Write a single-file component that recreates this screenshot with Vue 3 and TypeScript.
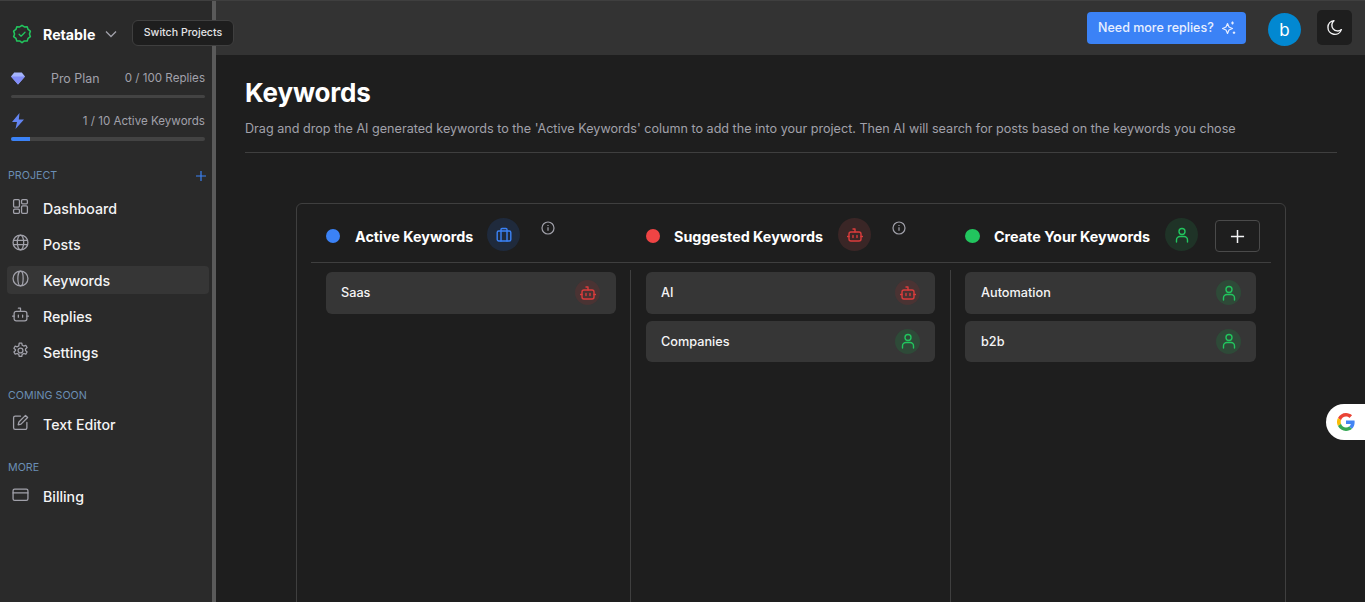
<template>
  <div class="page">
    <aside class="sidebar">
      <div class="brand">
        <svg class="brand-logo" viewBox="0 0 22 22" fill="none" stroke="#22c55e" stroke-width="1.7" stroke-linejoin="round" stroke-linecap="round">
          <path d="M11 1.500l2.600 1.700 3.100-.1 1 2.900 2.500 1.900-1 3 1 3-2.500 1.900-1 2.900-3.100-.1L11 20.500l-2.600-1.900-3.100.1-1-2.900-2.500-1.900 1-3-1-3 2.500-1.900 1-2.900 3.100.1z" />
          <path d="M7.800 11.200l2.200 2.200 4.300-4.300" stroke-width="1.400" />
        </svg>
        <span class="brand-name">Retable</span>
        <svg class="chevron" viewBox="0 0 12 8" fill="none" stroke="#a1a1aa" stroke-width="1.300"><path d="M1 1.500l5 5 5-5" /></svg>
        <div class="tooltip">Switch Projects</div>
      </div>

      <div class="usage">
        <div class="usage-row">
          <svg class="usage-icon" viewBox="0 0 14 12"><path d="M3.200 0h7.600L14 4 7 12 0 4z" fill="#a5b4fc" /><path d="M0 4h14L7 12z" fill="#818cf8" /></svg>
          <span class="plan">Pro Plan</span>
          <span>0 / 100 Replies</span>
        </div>
        <div class="bar"></div>
        <div class="usage-row second">
          <svg class="bolt" viewBox="0 0 14 16"><path d="M8.500 0L1 9h5l-1.500 7L13 6.500H7.800z" fill="#6384f0" /></svg>
          <span>1 / 10 Active Keywords</span>
        </div>
        <div class="bar tall"><div class="bar-fill" :style="{ width: keywordShare + '%' }"></div></div>
      </div>

      <div class="section-title first">
        <span>PROJECT</span>
        <svg class="section-add" viewBox="0 0 10 10" fill="none" stroke="#3b82f6" stroke-width="1.200"><path d="M5 0v10M0 5h10" /></svg>
      </div>
      <nav class="nav first-nav">
        <a v-for="item in projectNav" :key="item.label" class="nav-item" :class="{ active: item.active }">
          <svg class="nav-icon" viewBox="0 0 16 16" fill="none" stroke="#a1a1aa" stroke-width="1.200" stroke-linejoin="round" stroke-linecap="round" v-html="item.icon"></svg>
          <span>{{ item.label }}</span>
        </a>
      </nav>

      <div class="section-title soon">COMING SOON</div>
      <nav class="nav">
        <a class="nav-item">
          <svg class="nav-icon" viewBox="0 0 16 16" fill="none" stroke="#a1a1aa" stroke-width="1.200" stroke-linejoin="round" stroke-linecap="round" v-html="icons.edit"></svg>
          <span>Text Editor</span>
        </a>
      </nav>

      <div class="section-title more">MORE</div>
      <nav class="nav">
        <a class="nav-item">
          <svg class="nav-icon" viewBox="0 0 16 16" fill="none" stroke="#a1a1aa" stroke-width="1.200" stroke-linejoin="round" stroke-linecap="round" v-html="icons.card"></svg>
          <span>Billing</span>
        </a>
      </nav>
    </aside>

    <div class="content">
      <header class="topbar">
        <button class="upgrade">
          Need more replies?
          <svg viewBox="0 0 14 14" fill="none" stroke="#e5edff" stroke-width="1.200" stroke-linejoin="round"><path d="M5.500 2.500l1.500 3.500L10.500 7.500 7 9l-1.500 3.500L4 9 .5 7.500 4 6z" /><path d="M10.500 .5v3M9 2h3M12 10.500v2.500M10.800 11.700h2.400" /></svg>
        </button>
        <div class="avatar">b</div>
        <button class="theme">
          <svg viewBox="0 0 16 16" fill="none" stroke="#f4f4f5" stroke-width="1.300" stroke-linejoin="round"><path d="M7.500 1.500a6.500 6.500 0 1 0 7 8.500 5.500 5.500 0 0 1-7-8.500z" /></svg>
        </button>
      </header>

      <main class="main">
        <h1>Keywords</h1>
        <p class="lead">Drag and drop the AI generated keywords to the 'Active Keywords' column to add the into your project. Then AI will search for posts based on the keywords you chose</p>
        <hr class="rule" />

        <section class="board">
          <div class="board-head">
            <div v-for="col in columns" :key="col.title" class="col-head" :class="col.tone">
              <span class="dot"></span>
              <h2>{{ col.title }}</h2>
              <span class="badge large">
                <svg viewBox="0 0 16 16" fill="none" stroke="currentColor" stroke-width="1.400" stroke-linejoin="round" stroke-linecap="round" v-html="col.icon"></svg>
              </span>
              <svg v-if="col.info" class="info" viewBox="0 0 14 14" fill="none" stroke="#a1a1aa" stroke-width="1.200"><circle cx="7" cy="7" r="6" /><path d="M7 6.300v3.400" /><path d="M7 4v.9" /></svg>
              <button v-else class="add">
                <svg viewBox="0 0 16 16" fill="none" stroke="#f4f4f5" stroke-width="1.600"><path d="M8 1v14M1 8h14" /></svg>
              </button>
            </div>
          </div>
          <div class="board-body">
            <div v-for="col in columns" :key="col.title" class="col">
              <div v-for="item in col.items" :key="item.label" class="kw">
                <span>{{ item.label }}</span>
                <span class="badge" :class="item.tone">
                  <svg viewBox="0 0 16 16" fill="none" stroke="currentColor" stroke-width="1.400" stroke-linejoin="round" stroke-linecap="round" v-html="item.tone === 'red' ? icons.bot : icons.user"></svg>
                </span>
              </div>
            </div>
          </div>
        </section>
      </main>
    </div>

    <div class="google">
      <svg viewBox="0 0 48 48">
        <path fill="#EA4335" d="M24 9.500c3.500 0 6.700 1.200 9.200 3.600l6.900-6.900C35.900 2.400 30.500 0 24 0 14.600 0 6.500 5.400 2.600 13.200l8 6.200C12.400 13.700 17.700 9.500 24 9.500z" />
        <path fill="#4285F4" d="M47 24.500c0-1.600-.1-3.100-.4-4.500H24v9h12.900c-.6 3-2.200 5.500-4.700 7.200l7.700 6C44.400 38 47 31.800 47 24.500z" />
        <path fill="#FBBC05" d="M10.600 28.600a14.500 14.500 0 0 1 0-9.200l-8-6.200a24 24 0 0 0 0 21.600z" />
        <path fill="#34A853" d="M24 48c6.500 0 11.900-2.100 15.900-5.800l-7.700-6c-2.200 1.400-4.900 2.300-8.200 2.300-6.300 0-11.600-4.200-13.400-9.900l-8 6.200C6.500 42.600 14.600 48 24 48z" />
      </svg>
    </div>
  </div>
</template>

<script setup lang="ts">
const icons = {
  dashboard:
    '<rect x="1.500" y="1.500" width="5.500" height="7" rx="1"/><rect x="9" y="1.500" width="5.500" height="4" rx="1"/><rect x="9" y="7.500" width="5.500" height="7" rx="1"/><rect x="1.500" y="10.500" width="5.500" height="4" rx="1"/>',
  globe:
    '<circle cx="8" cy="8" r="7"/><path d="M1.300 6h13.400M1.300 10h13.400"/><ellipse cx="8" cy="8" rx="3" ry="7"/>',
  keyword: '<circle cx="8" cy="8" r="7"/><ellipse cx="8" cy="8" rx="2.500" ry="7"/>',
  bot:
    '<rect x="2" y="5" width="12" height="9" rx="2"/><path d="M8 5V2H6M.5 9.500H2M14 9.500h1.500M6 8.500v2M10 8.500v2"/>',
  gear:
    '<circle cx="8" cy="8" r="2.300"/><path d="M6.800 1h2.400l.4 2 1.500.8 1.900-.7 1.200 2.100-1.500 1.300v1.600l1.500 1.300-1.200 2.100-1.900-.7-1.500.8-.4 2H6.800l-.4-2-1.500-.8-1.900.7-1.200-2.100 1.500-1.300V7.200L1.800 5.900 3 3.800l1.900.7 1.500-.8z"/>',
  edit:
    '<path d="M8 2H3a1.500 1.500 0 0 0-1.500 1.500v9.500A1.500 1.500 0 0 0 3 14.500h9.500A1.500 1.500 0 0 0 14 13V8"/><path d="M12.700 1.300l2 2L8.500 9.500l-2.700.7.700-2.700z"/>',
  card: '<rect x="1" y="3" width="14" height="10.500" rx="1.500"/><path d="M1 6.500h14"/>',
  briefcase:
    '<rect x="1.200" y="4" width="13.600" height="10" rx="1.500"/><path d="M5 4V2.500A1 1 0 0 1 6 1.500h4a1 1 0 0 1 1 1V4M5 4v10M11 4v10"/>',
  user: '<circle cx="8" cy="4.500" r="3"/><path d="M2.500 15v-2a3.500 3.500 0 0 1 3.500-3.500h4a3.500 3.500 0 0 1 3.500 3.500v2"/>',
}

const projectNav = [
  { label: 'Dashboard', icon: icons.dashboard, active: false },
  { label: 'Posts', icon: icons.globe, active: false },
  { label: 'Keywords', icon: icons.keyword, active: true },
  { label: 'Replies', icon: icons.bot, active: false },
  { label: 'Settings', icon: icons.gear, active: false },
]

const columns = [
  { title: 'Active Keywords', tone: 'blue', icon: icons.briefcase, info: true, items: [{ label: 'Saas', tone: 'red' }] },
  {
    title: 'Suggested Keywords',
    tone: 'red',
    icon: icons.bot,
    info: true,
    items: [
      { label: 'AI', tone: 'red' },
      { label: 'Companies', tone: 'green' },
    ],
  },
  {
    title: 'Create Your Keywords',
    tone: 'green',
    icon: icons.user,
    info: false,
    items: [
      { label: 'Automation', tone: 'green' },
      { label: 'b2b', tone: 'green' },
    ],
  },
]

const keywordShare = 10
</script>

<style>
html,
body {
  margin: 0;
  background: #1e1e1e;
  overflow: hidden;
}
</style>

<style scoped>
.page {
  display: flex;
  height: 602px;
  overflow: hidden;
  position: relative;
  font-family: Inter, 'Liberation Sans', sans-serif;
  color: #f4f4f5;
  border-top: 1px solid #3f3f3f;
  box-sizing: border-box;
  background: #1e1e1e;
}

.sidebar {
  width: 212px;
  flex: none;
  background: #2a2a2a;
  border-right: 4px solid #5a5a5a;
}

.brand {
  display: flex;
  align-items: center;
  height: 67px;
  padding: 0 0 1px 12px;
  box-sizing: border-box;
  position: relative;
}

.brand-logo {
  width: 20px;
  height: 20px;
}

.brand-name {
  margin-left: 11px;
  font-size: 14.2px;
  font-weight: 700;
  color: #fff;
}

.chevron {
  width: 12px;
  height: 8px;
  margin-left: 10px;
}

.tooltip {
  position: absolute;
  left: 132px;
  top: 19px;
  width: 102px;
  height: 26px;
  box-sizing: border-box;
  border: 1px solid #3f3f3f;
  border-radius: 6px;
  background: #1e1e1e;
  font-size: 10.6px;
  font-weight: 500;
  line-height: 24px;
  text-align: center;
  color: #e4e4e7;
  z-index: 3;
}

.usage {
  margin-left: 11px;
  width: 194px;
  font-size: 11.6px;
  color: #a1a1aa;
}

.usage-row {
  display: flex;
  align-items: center;
  justify-content: space-between;
  height: 20px;
}

.usage-row.second {
  margin-top: 13px;
}

.usage-icon {
  width: 14px;
  height: 13px;
}

.bolt {
  width: 14px;
  height: 16px;
}

.plan {
  margin-left: 26px;
  margin-right: auto;
  font-size: 12.4px;
}

.bar {
  height: 3px;
  margin-top: 7px;
  background: #434343;
  border-radius: 2px;
  overflow: hidden;
}

.bar.tall {
  height: 4px;
  margin-top: 6px;
}

.bar-fill {
  height: 100%;
  background: #3b82f6;
}

.section-title {
  display: flex;
  justify-content: space-between;
  align-items: center;
  padding: 0 6px 0 8px;
  font-size: 10.7px;
  line-height: 14px;
  color: #6a8fb5;
}

.section-title.first {
  margin-top: 28px;
}

.section-title.soon {
  margin-top: 23px;
}

.section-title.more {
  margin-top: 23px;
}

.section-add {
  width: 10px;
  height: 10px;
}

.nav {
  display: flex;
  flex-direction: column;
  gap: 8px;
  margin-top: 7px;
  padding: 0 3px 0 7px;
}

.nav.first-nav {
  margin-top: 11px;
}

.nav-item {
  display: flex;
  align-items: center;
  gap: 14px;
  height: 28px;
  padding-left: 5px;
  border-radius: 4px;
  font-size: 14.2px;
  font-weight: 500;
  color: #f4f4f5;
}

.nav-item.active {
  background: #363636;
}

.nav-icon {
  width: 17px;
  height: 17px;
  margin-top: -3px;
}

.content {
  flex: 1;
  min-width: 0;
}

.topbar {
  display: flex;
  align-items: center;
  justify-content: flex-end;
  height: 54px;
  background: #333;
  padding-right: 13px;
}

.upgrade {
  display: flex;
  align-items: center;
  gap: 8px;
  width: 159px;
  height: 32px;
  padding: 0 0 2px 11px;
  border: 0;
  border-radius: 4px;
  background: #3b82f6;
  color: #e8efff;
  font: 500 12.5px Inter, sans-serif;
}

.upgrade svg {
  width: 14px;
  height: 14px;
  margin-top: 2px;
}

.avatar {
  width: 33px;
  height: 33px;
  margin-left: 22px;
  border-radius: 50%;
  background: #0288d1;
  color: #fff;
  font-size: 17px;
  line-height: 35px;
  text-align: center;
  margin-top: 3px;
}

.theme {
  display: flex;
  align-items: center;
  justify-content: center;
  width: 35px;
  height: 35px;
  padding: 0;
  margin-left: 16px;
  margin-top: -2px;
  border: 0;
  border-radius: 5px;
  background: #1e1e1e;
}

.theme svg {
  width: 17px;
  height: 17px;
}

.main {
  padding: 22px 28px 0 29px;
}

h1 {
  margin: 0;
  font-size: 26px;
  line-height: 32px;
  font-weight: 700;
  letter-spacing: -0.15px;
  color: #fff;
}

.lead {
  margin: 11px 0 0;
  font-size: 12.6px;
  line-height: 18px;
  color: #a1a1aa;
  white-space: nowrap;
}

.rule {
  height: 1px;
  margin: 14px 0 0;
  border: 0;
  background: #3f3f3f;
}

.board {
  width: 990px;
  height: 500px;
  margin: 50px 0 0 51px;
  box-sizing: border-box;
  padding: 0 14px;
  border: 1px solid #3f3f3f;
  border-radius: 6px;
}

.board-head {
  display: grid;
  grid-template-columns: 320px 319px 1fr;
  height: 52px;
  padding-top: 6px;
  border-bottom: 1px solid #3f3f3f;
}

.col-head {
  display: flex;
  align-items: center;
  padding-left: 15px;
}

.dot {
  width: 14px;
  height: 14px;
  border-radius: 50%;
  margin-right: 15px;
  background: #3b82f6;
}

.col-head.red .dot,
.col-head.green .dot {
  margin-right: 14px;
}

.col-head.red .dot {
  background: #ef4444;
}

.col-head.green .dot {
  width: 15px;
  background: #22c55e;
}

h2 {
  margin: 0;
  font-size: 14.35px;
  font-weight: 700;
  color: #fff;
  white-space: nowrap;
}

.badge {
  display: flex;
  align-items: center;
  justify-content: center;
  width: 25px;
  height: 25px;
  border-radius: 50%;
}

.badge svg {
  width: 16px;
  height: 16px;
}

.badge.red {
  background: #4a3333;
  color: #dc3c3c;
}

.badge.green {
  background: #2e4a38;
  color: #22c55e;
}

.badge.large {
  width: 33px;
  height: 33px;
  margin: 0 0 3px 15px;
  flex: none;
}

.col-head.blue .badge.large {
  margin-left: 14px;
  background: #1f2a3c;
  color: #3b82f6;
}

.col-head.red .badge.large {
  background: #3a2626;
  color: #dc3c3c;
}

.col-head.green .badge.large {
  background: #1f3327;
  color: #22c55e;
}

.info {
  width: 14px;
  height: 14px;
  margin: 0 0 16px 21px;
}

.add {
  display: flex;
  align-items: center;
  justify-content: center;
  width: 45px;
  height: 32px;
  margin-left: 17px;
  padding: 0;
  border: 1px solid #4a4a4a;
  border-radius: 4px;
  background: transparent;
}

.add svg {
  width: 15px;
  height: 15px;
}

.board-body {
  display: grid;
  grid-template-columns: 320px 320px 1fr;
  padding-top: 7px;
  height: 400px;
}

.col {
  display: flex;
  flex-direction: column;
  gap: 7px;
  padding: 2px 15px 0;
  border-right: 1px solid #3f3f3f;
  box-sizing: border-box;
  height: 400px;
}

.col:first-child {
  padding-right: 14px;
}

.col:last-child {
  padding-left: 14px;
  border-right: 0;
}

.kw {
  display: flex;
  align-items: center;
  justify-content: space-between;
  height: 41.5px;
  padding: 0 15px;
  border-radius: 6px;
  background: #363636;
  font-size: 12.7px;
  font-weight: 500;
  color: #f4f4f5;
}

.col:first-child .kw {
  padding-right: 16px;
}

.col:last-child .kw {
  padding-left: 16px;
}

.google {
  position: absolute;
  right: 0;
  top: 403px;
  display: flex;
  align-items: center;
  width: 39px;
  height: 36px;
  padding-left: 11px;
  box-sizing: border-box;
  background: #fff;
  border-radius: 18px 0 0 18px;
}

.google svg {
  width: 18px;
  height: 18px;
}
</style>
